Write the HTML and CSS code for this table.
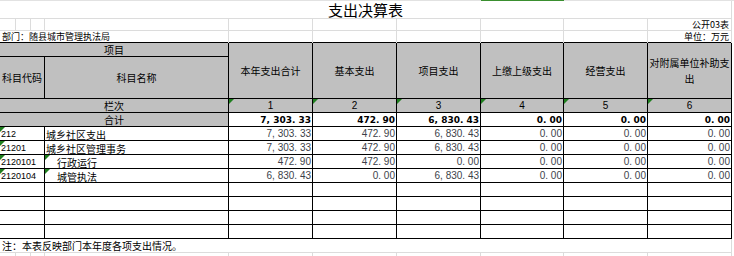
FILE: index.html
```html
<!DOCTYPE html>
<html lang="zh-CN">
<head>
<meta charset="utf-8">
<title>支出决算表</title>
<link rel="stylesheet" href="styles.css">
</head>
<body>
<div class="sheet">
  <div class="band topline"><span class="sel"></span></div>
  <div class="band">
    <div class="title">支出决算表</div>
  </div>
  <div class="band meta first">
    <span class="g"></span><span class="g"></span><span class="g"></span><span class="g"></span>
    <span class="g"></span><span class="g"></span><span class="g"></span><span class="g"></span><span class="g"></span>
    <span class="g right">公开03表</span>
    <span class="end"></span>
  </div>
  <div class="band meta">
    <span class="g dept">部门：随县城市管理执法局</span>
    <span class="g"></span><span class="g"></span><span class="g"></span><span class="g"></span><span class="g"></span>
    <span class="g right">单位：万元</span>
    <span class="end"></span>
  </div>

  <div class="table">
    <div class="c hd item-head">项目</div>
    <div class="c hd tall">本年支出合计</div>
    <div class="c hd tall">基本支出</div>
    <div class="c hd tall">项目支出</div>
    <div class="c hd tall">上缴上级支出</div>
    <div class="c hd tall">经营支出</div>
    <div class="c hd tall wrap">对附属单位补助支出</div>
    <div class="c hd code-head">科目代码</div>
    <div class="c hd name-head">科目名称</div>

    <div class="c hd span2">栏次</div>
    <div class="c hd num-h mk">1</div>
    <div class="c hd num-h mk">2</div>
    <div class="c hd num-h mk">3</div>
    <div class="c hd num-h mk">4</div>
    <div class="c hd num-h mk">5</div>
    <div class="c hd num-h mk">6</div>

    <div class="c hd span2">合计</div>
    <div class="c num bold">7, 303. 33</div>
    <div class="c num bold">472. 90</div>
    <div class="c num bold">6, 830. 43</div>
    <div class="c num bold">0. 00</div>
    <div class="c num bold">0. 00</div>
    <div class="c num bold">0. 00</div>

    <div class="c code mk">212</div>
    <div class="c name">城乡社区支出</div>
    <div class="c num">7, 303. 33</div>
    <div class="c num">472. 90</div>
    <div class="c num">6, 830. 43</div>
    <div class="c num">0. 00</div>
    <div class="c num">0. 00</div>
    <div class="c num">0. 00</div>

    <div class="c code mk">21201</div>
    <div class="c name">城乡社区管理事务</div>
    <div class="c num">7, 303. 33</div>
    <div class="c num">472. 90</div>
    <div class="c num">6, 830. 43</div>
    <div class="c num">0. 00</div>
    <div class="c num">0. 00</div>
    <div class="c num">0. 00</div>

    <div class="c code mk">2120101</div>
    <div class="c name indent mk">行政运行</div>
    <div class="c num">472. 90</div>
    <div class="c num">472. 90</div>
    <div class="c num">0. 00</div>
    <div class="c num">0. 00</div>
    <div class="c num">0. 00</div>
    <div class="c num">0. 00</div>

    <div class="c code mk">2120104</div>
    <div class="c name indent mk">城管执法</div>
    <div class="c num">6, 830. 43</div>
    <div class="c num">0. 00</div>
    <div class="c num">6, 830. 43</div>
    <div class="c num">0. 00</div>
    <div class="c num">0. 00</div>
    <div class="c num">0. 00</div>

    <div class="c"></div><div class="c"></div><div class="c"></div><div class="c"></div>
    <div class="c"></div><div class="c"></div><div class="c"></div><div class="c"></div>
    <div class="c"></div><div class="c"></div><div class="c"></div><div class="c"></div>
    <div class="c"></div><div class="c"></div><div class="c"></div><div class="c"></div>
    <div class="c"></div><div class="c"></div><div class="c"></div><div class="c"></div>
    <div class="c"></div><div class="c"></div><div class="c"></div><div class="c"></div>
    <div class="c"></div><div class="c"></div><div class="c"></div><div class="c"></div>
    <div class="c"></div><div class="c"></div><div class="c"></div><div class="c"></div>
  </div>

  <div class="band note-row">
    <span class="g note">注：本表反映部门本年度各项支出情况。</span>
    <span class="end"></span>
  </div>
  <div class="band foot">
    <span class="g"></span><span class="g"></span><span class="g"></span><span class="g"></span>
    <span class="g"></span><span class="g"></span><span class="g"></span><span class="g"></span><span class="g"></span><span class="g"></span>
    <span class="end"></span>
  </div>
</div>
</body>
</html>
```

FILE: styles.css
```css
* { box-sizing: border-box; }

html, body {
  margin: 0;
  padding: 0;
  background: #ffffff;
}

body {
  font-family: "Noto Sans CJK SC", "Noto Sans", sans-serif;
  font-size: 10px;
  color: #000;
  width: 734px;
  height: 256px;
  overflow: hidden;
}

.sheet {
  width: 734px;
}

.band {
  display: grid;
  grid-template-columns: 16px 15px 14px 184px 84px 84px 84px 83px 84px 84px 1fr;
}

.topline {
  height: 1px;
  background: #e2e2e2;
}

.sel {
  grid-column: 8;
  background: #3a8f2f;
}

.title {
  grid-column: 1 / 11;
  height: 18px;
  border-bottom: 1px solid #dcdcdc;
  border-right: 1px solid #dcdcdc;
  font-size: 15px;
  line-height: 18px;
  text-align: center;
}

.g {
  border-right: 1px solid #dcdcdc;
}

.meta {
  height: 11px;
}

.meta.first {
  height: 12px;
}

.meta.first .g {
  border-bottom: 1px solid #dcdcdc;
}

.meta .g {
  font-size: 9px;
  line-height: 12px;
  white-space: nowrap;
  overflow: visible;
}

.meta.first .g {
  line-height: 11px;
}

.dept {
  grid-column: 1 / 5;
  padding-left: 2px;
}

.right {
  text-align: right;
  padding-right: 2px;
}

/* main table */
.table {
  display: grid;
  width: 732px;
  grid-template-columns: 45px 184px 84px 84px 84px 83px 84px 84px;
  grid-template-rows: 14px 42px repeat(10, 14px);
  border-top: 1px solid #000;
}

.c {
  position: relative;
  border-right: 1px solid #000;
  border-bottom: 1px solid #000;
  display: flex;
  align-items: center;
  white-space: nowrap;
  line-height: 12px;
  overflow: hidden;
}

.hd {
  background: #c0c0c0;
  justify-content: center;
  text-align: center;
}

.item-head {
  grid-column: 1 / 3;
  grid-row: 1;
}

.code-head {
  grid-column: 1;
  grid-row: 2;
}

.name-head {
  grid-column: 2;
  grid-row: 2;
}

.span2 {
  grid-column: 1 / 3;
}

.tall {
  grid-row: 1 / 3;
}

.wrap {
  white-space: normal;
  line-height: 16px;
  padding: 0 1px;
}

.num-h {
  font-family: "Liberation Sans", Arial, sans-serif;
  font-size: 10px;
  padding-top: 1px;
}

.num {
  justify-content: flex-end;
  padding-right: 1px;
  font-family: "Liberation Sans", Arial, sans-serif;
  font-size: 10px;
  color: #3c3f4a;
  white-space: pre;
}

.num.bold {
  font-family: "DejaVu Sans", Verdana, sans-serif;
  font-weight: bold;
  font-size: 9px;
  color: #000;
}

.code {
  font-family: "Liberation Sans", Arial, sans-serif;
  font-size: 9px;
  padding-left: 1px;
  padding-top: 1px;
}

.name {
  padding-left: 1px;
  padding-top: 2px;
}

.indent {
  padding-left: 12px;
}

.mk::before {
  content: "";
  position: absolute;
  left: 0;
  top: 0;
  width: 0;
  height: 0;
  border-top: 5px solid #1f7f1f;
  border-right: 5px solid transparent;
}

/* bottom */
.note-row {
  height: 14px;
}

.note {
  grid-column: 1 / 11;
  border-bottom: 1px solid #dcdcdc;
  padding-left: 2px;
  line-height: 13px;
  white-space: nowrap;
}

.foot {
  height: 3px;
}
```
